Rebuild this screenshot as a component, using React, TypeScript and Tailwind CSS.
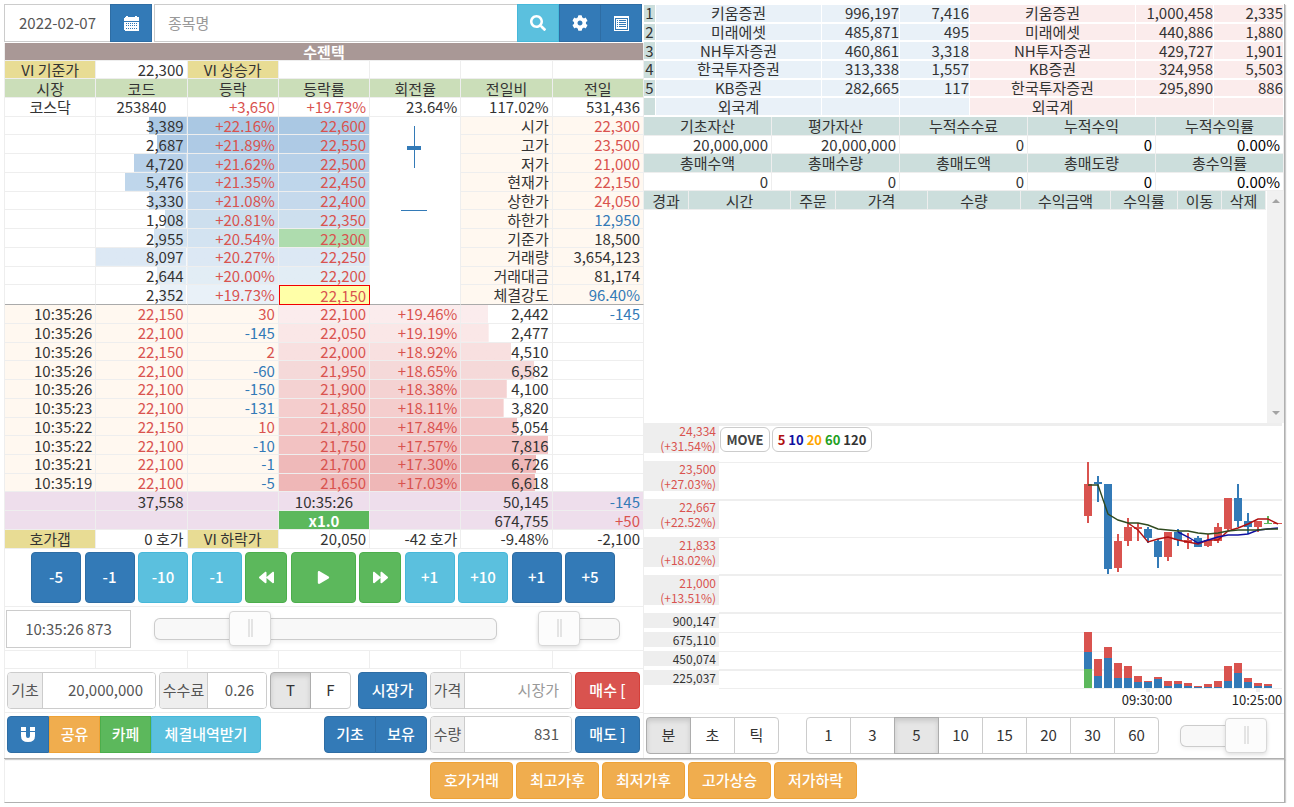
import type { ReactNode } from "react";
import { FaBackward, FaCog, FaForward, FaPlay, FaSearch } from "react-icons/fa";
import clsx from "clsx";

const RED = "text-[#d9534f]";
const BLUE = "text-[#337ab7]";

const toneOf = (value: string) => (value.startsWith("-") ? BLUE : RED);

const MAX_QTY = 8150;

const asks = [
  { qty: "3,389", rate: "+22.16%", price: "22,600", fill: "from-[#aac8e3] to-[#aac8e3]", label: "시가", value: "22,300", tone: RED },
  { qty: "2,687", rate: "+21.89%", price: "22,550", fill: "from-[#aecae5] to-[#aecae5]", label: "고가", value: "23,500", tone: RED },
  { qty: "4,720", rate: "+21.62%", price: "22,500", fill: "from-[#b7d0e8] to-[#b7d0e8]", label: "저가", value: "21,000", tone: RED },
  { qty: "5,476", rate: "+21.35%", price: "22,450", fill: "from-[#bfd6eb] to-[#bfd6eb]", label: "현재가", value: "22,150", tone: RED },
  { qty: "3,330", rate: "+21.08%", price: "22,400", fill: "from-[#c5d9ec] to-[#c5d9ec]", label: "상한가", value: "24,050", tone: RED },
  { qty: "1,908", rate: "+20.81%", price: "22,350", fill: "from-[#cddfee] to-[#cddfee]", label: "하한가", value: "12,950", tone: BLUE },
  { qty: "2,955", rate: "+20.54%", price: "22,300", fill: "from-[#d3e3f1] to-[#d3e3f1]", label: "기준가", value: "18,500", tone: "" },
  { qty: "8,097", rate: "+20.27%", price: "22,250", fill: "from-[#dce8f4] to-[#dce8f4]", label: "거래량", value: "3,654,123", tone: "" },
  { qty: "2,644", rate: "+20.00%", price: "22,200", fill: "from-[#e2edf5] to-[#e2edf5]", label: "거래대금", value: "81,174", tone: "" },
  { qty: "2,352", rate: "+19.73%", price: "22,150", fill: "from-[#e9f1f8] to-[#e9f1f8]", label: "체결강도", value: "96.40%", tone: BLUE },
];

const bids = [
  { time: "10:35:26", deal: "22,150", vol: "30", price: "22,100", rate: "+19.46%", qty: "2,442", diff: "-145", fill: "from-[#fbeced] to-[#fbeced]" },
  { time: "10:35:26", deal: "22,100", vol: "-145", price: "22,050", rate: "+19.19%", qty: "2,477", diff: "", fill: "from-[#fae7e7] to-[#fae7e7]" },
  { time: "10:35:26", deal: "22,150", vol: "2", price: "22,000", rate: "+18.92%", qty: "4,510", diff: "", fill: "from-[#f8e0e0] to-[#f8e0e0]" },
  { time: "10:35:26", deal: "22,100", vol: "-60", price: "21,950", rate: "+18.65%", qty: "6,582", diff: "", fill: "from-[#f5d9d9] to-[#f5d9d9]" },
  { time: "10:35:26", deal: "22,100", vol: "-150", price: "21,900", rate: "+18.38%", qty: "4,100", diff: "", fill: "from-[#f4d2d2] to-[#f4d2d2]" },
  { time: "10:35:23", deal: "22,100", vol: "-131", price: "21,850", rate: "+18.11%", qty: "3,820", diff: "", fill: "from-[#f4cdcd] to-[#f4cdcd]" },
  { time: "10:35:22", deal: "22,150", vol: "10", price: "21,800", rate: "+17.84%", qty: "5,054", diff: "", fill: "from-[#f3c6c6] to-[#f3c6c6]" },
  { time: "10:35:22", deal: "22,100", vol: "-10", price: "21,750", rate: "+17.57%", qty: "7,816", diff: "", fill: "from-[#f2c2c2] to-[#f2c2c2]" },
  { time: "10:35:21", deal: "22,100", vol: "-1", price: "21,700", rate: "+17.30%", qty: "6,726", diff: "", fill: "from-[#efb9b9] to-[#efb9b9]" },
  { time: "10:35:19", deal: "22,100", vol: "-5", price: "21,650", rate: "+17.03%", qty: "6,618", diff: "", fill: "from-[#efb7b7] to-[#efb7b7]" },
];

const brokers = [
  ["1", "키움증권", "996,197", "7,416", "키움증권", "1,000,458", "2,335"],
  ["2", "미래에셋", "485,871", "495", "미래에셋", "440,886", "1,880"],
  ["3", "NH투자증권", "460,861", "3,318", "NH투자증권", "429,727", "1,901"],
  ["4", "한국투자증권", "313,338", "1,557", "KB증권", "324,958", "5,503"],
  ["5", "KB증권", "282,665", "117", "한국투자증권", "295,890", "886"],
  ["", "외국계", "", "", "외국계", "", ""],
];

const accountHead = ["기초자산", "평가자산", "누적수수료", "누적수익", "누적수익률"];
const accountRow = ["20,000,000", "20,000,000", "0", "0", "0.00%"];
const tradeHead = ["총매수액", "총매수량", "총매도액", "총매도량", "총수익률"];
const tradeRow = ["0", "0", "0", "0", "0.00%"];

const priceAxis = [
  ["24,334", "(+31.54%)"],
  ["23,500", "(+27.03%)"],
  ["22,667", "(+22.52%)"],
  ["21,833", "(+18.02%)"],
  ["21,000", "(+13.51%)"],
];
const volumeAxis = ["900,147", "675,110", "450,074", "225,037"];

const UP = "#d9534f";
const DOWN = "#337ab7";
const FLAT = "#5cb85c";

// high, low, body top, body bottom, colour
const candles: [number, number, number, number, string][] = [
  [39, 100, 61, 93, UP],
  [53, 79, 59, 61, DOWN],
  [61, 151, 61, 146, DOWN],
  [111, 149, 118, 145, UP],
  [95, 123, 104, 118, UP],
  [100, 118, 104, 106, UP],
  [104, 120, 106, 115, DOWN],
  [116, 145, 118, 134, DOWN],
  [109, 138, 109, 134, UP],
  [106, 123, 109, 117, DOWN],
  [110, 126, 117, 120, UP],
  [113, 124, 115, 124, DOWN],
  [111, 124, 117, 123, UP],
  [100, 120, 104, 118, UP],
  [75, 107, 75, 106, UP],
  [61, 104, 75, 98, DOWN],
  [90, 111, 98, 104, DOWN],
  [98, 109, 98, 104, UP],
  [93, 101, 100, 101, FLAT],
];

// top of the buy part, top of the sell part
const volumes = [
  [209, 229], [236, 253], [224, 235], [240, 255], [243, 255], [253, 259], [258, 259], [254, 256], [258, 263], [258, 261],
  [260, 263], [263, 264], [261, 264], [258, 264], [243, 258], [240, 250], [255, 259], [260, 263], [261, 263],
];

const ma5 = [100, 107, 119, 116, 114, 117, 119, 121, 117, 117, 108, 105, 101, 96, 96, 101];
const ma10 = [109, 114, 120, 117, 114, 112, 112, 111, 107, 106, 105];
const ma60 = [62, 62, 91, 97, 100, 100, 102, 106, 107, 108, 108, 110, 111, 110, 108, 107, 107, 107, 106, 106];

const gridLines = [
  [0, 3], [39, 1], [76, 2], [114, 1], [151, 2], [189, 2], [209, 1], [228, 1], [246, 2], [265, 1],
];

const xAt = (i: number) => 369 + i * 10;
const toPoints = (ys: number[], start: number) => ys.map((y, i) => `${xAt(i + start)},${y}`).join(" ");
const barWidth = (qty: string) => `${(Number(qty.replace(",", "")) / MAX_QTY) * 100}% 100%`;

const solid = {
  primary: "border-[#2e6da4] bg-[#337ab7] text-white",
  info: "border-[#46b8da] bg-[#5bc0de] text-white",
  success: "border-[#4cae4c] bg-[#5cb85c] text-white",
  danger: "border-[#d43f3a] bg-[#d9534f] text-white",
  warning: "border-[#eea236] bg-[#f0ad4e] text-white",
};

function Btn({ kind, className, label, children }: { kind: keyof typeof solid; className?: string; label?: string; children: ReactNode }) {
  return (
    <button type="button" aria-label={label} className={clsx("flex shrink-0 items-center justify-center border font-medium", solid[kind], className)}>
      {children}
    </button>
  );
}

function Toggle({ items, active, width }: { items: string[]; active?: string; width: string }) {
  return (
    <div className="flex h-[37px]">
      {items.map((item) => (
        <button
          key={item}
          type="button"
          aria-pressed={item === active}
          className={clsx(
            "-ml-px border first:ml-0 first:rounded-l last:rounded-r",
            width,
            item === active ? "z-10 border-[#adadad] bg-[#e6e6e6] shadow-[inset_0_3px_5px_rgba(0,0,0,0.125)]" : "border-[#ccc] bg-white"
          )}
        >
          {item}
        </button>
      ))}
    </div>
  );
}

function Field({ id, label, value, placeholder, addon, className }: { id: string; label: string; value?: string; placeholder?: string; addon: string; className: string }) {
  return (
    <div className={clsx("flex h-[37px] overflow-hidden rounded border border-[#ccc] text-[#555]", className)}>
      <label htmlFor={id} className={clsx("flex shrink-0 items-center justify-center border-r border-[#ccc] bg-[#eee]", addon)}>
        {label}
      </label>
      <input id={id} defaultValue={value} placeholder={placeholder} className="w-full min-w-0 bg-white pr-3 text-right outline-none placeholder:text-[#999]" />
    </div>
  );
}

function Slider({ label, value, className }: { label: string; value: number; className: string }) {
  return (
    <input
      type="range"
      aria-label={label}
      defaultValue={value}
      className={clsx(
        "h-[35px] appearance-none bg-transparent",
        "[&::-webkit-slider-runnable-track]:h-[22px] [&::-webkit-slider-runnable-track]:rounded-md [&::-webkit-slider-runnable-track]:bg-[#f8f8f8] [&::-webkit-slider-runnable-track]:shadow-[inset_0_0_0_1px_#ccc,0_2px_4px_rgba(0,0,0,0.06)]",
        "[&::-webkit-slider-thumb]:-mt-[7px] [&::-webkit-slider-thumb]:h-[35px] [&::-webkit-slider-thumb]:w-[42px] [&::-webkit-slider-thumb]:appearance-none [&::-webkit-slider-thumb]:rounded [&::-webkit-slider-thumb]:border [&::-webkit-slider-thumb]:border-[#d8d8d8] [&::-webkit-slider-thumb]:bg-[#fcfcfc] [&::-webkit-slider-thumb]:shadow-[0_2px_4px_rgba(0,0,0,0.12)]",
        "[&::-webkit-slider-thumb]:bg-[linear-gradient(90deg,#e4e4e4_2px,#fcfcfc_2px,#fcfcfc_3px,#e4e4e4_3px)] [&::-webkit-slider-thumb]:bg-[length:5px_18px] [&::-webkit-slider-thumb]:bg-center [&::-webkit-slider-thumb]:bg-no-repeat",
        className
      )}
    />
  );
}

function CalendarIcon() {
  return (
    <svg viewBox="0 0 15 15" className="size-[15px]" fill="#fff" shapeRendering="crispEdges">
      <path d="M2 0h2v1h7V0h2v1h1l1 1v3H0V2l1-1h1z" />
      <path fillRule="evenodd" d="M0 6h15v8l-1 1H1l-1-1zM2 7v1h1V7zM4 7v1h1V7zM6 7v1h1V7zM8 7v1h1V7zM10 7v1h1V7zM12 7v1h1V7zM2 9v1h1V9zM4 9v1h1V9zM6 9v1h1V9zM8 9v1h1V9zM10 9v1h1V9zM12 9v1h1V9zM2 12v1h1v-1zM4 12v1h1v-1zM6 12v1h1v-1zM8 12v1h1v-1zM10 12v1h1v-1zM12 12v1h1v-1z" />
    </svg>
  );
}

function ListIcon() {
  return (
    <svg viewBox="0 0 15 15" className="size-[15px]" shapeRendering="crispEdges">
      <path fill="#fff" d="M0 0h15v15H0z" />
      <path fill="#337ab7" fillRule="evenodd" d="M1 2h13v12H1zM2 3v10h11V3z" />
      <path fill="#337ab7" d="M3 4h1v1H3zM5 4h7v1H5zM3 6h1v1H3zM5 6h7v1H5zM3 8h1v1H3zM5 8h7v1H5zM3 10h1v1H3zM5 10h7v1H5z" />
    </svg>
  );
}

function MagnetIcon() {
  return (
    <svg viewBox="0 0 14 15" className="h-[15px] w-[14px]" fill="#fff">
      <path d="M0 0h5v4H0zM9 0h5v4H9zM0 5h5v4q0 2 2 2t2-2V5h5v4q0 6-7 6T0 9z" />
    </svg>
  );
}

const cell = "border-r border-b border-[#eee] p-0";
const num = "border-r border-b border-[#eee] p-0 pr-[3px] text-right";
const gold = "border-r border-b border-[#eee] bg-[#e8dc94] p-0 text-center font-normal";
const cream = "bg-[#fff8f0]";
const violet = "bg-[#eedeec]";

function OrderBook() {
  return (
    <table className="mt-px h-[506px] w-full table-fixed border-separate border-spacing-0 border-l border-[#eee] leading-[17px]">
      <thead>
        <tr>
          <th colSpan={7} className="border-r border-b border-[#eee] bg-[#a99896] p-0 font-bold text-white">수젠텍</th>
        </tr>
        <tr>
          <th className={gold}>VI 기준가</th>
          <td className={num}>22,300</td>
          <th className={gold}>VI 상승가</th>
          <td className={cell} />
          <td className={cell} />
          <td className={cell} />
          <td className={cell} />
        </tr>
        <tr className="h-[19px]">
          {["시장", "코드", "등락", "등락률", "회전율", "전일비", "전일"].map((h) => (
            <th key={h} className="border-r border-b border-[#eee] bg-[#cbdeb9] p-0 font-normal">{h}</th>
          ))}
        </tr>
      </thead>
      <tbody>
        <tr>
          <td className={clsx(cell, "text-center")}>코스닥</td>
          <td className={clsx(cell, "text-center")}>253840</td>
          <td className={clsx(num, RED)}>+3,650</td>
          <td className={clsx(num, RED)}>+19.73%</td>
          <td className={num}>23.64%</td>
          <td className={num}>117.02%</td>
          <td className={num}>531,436</td>
        </tr>
        {asks.map((row, i) => {
          const last = i === asks.length - 1;
          const edge = last && "border-b-[#aaa]";
          return (
            <tr key={row.price}>
              <td className={clsx(cell, edge)} />
              <td className={clsx(num, edge, "bg-linear-to-r bg-right bg-no-repeat", row.fill)} style={{ backgroundSize: barWidth(row.qty) }}>
                {row.qty}
              </td>
              <td className={clsx(num, edge, RED, "bg-linear-to-r", row.fill)}>{row.rate}</td>
              <td
                className={clsx(
                  last ? "border border-[#f00000] bg-[#ffffa8] p-0 pr-[3px] text-right" : num,
                  RED,
                  row.price === "22,300" && "bg-[#aedcae]",
                  row.price !== "22,300" && !last && ["bg-linear-to-r", row.fill]
                )}
              >
                {row.price}
              </td>
              {i === 0 && (
                <td rowSpan={10} className="border-r border-b border-r-[#eee] border-b-[#aaa] p-0 align-top">
                  <svg viewBox="0 0 90 120" className="block w-full" fill={DOWN} shapeRendering="crispEdges">
                    <rect x="44" y="9" width="1" height="42" />
                    <rect x="37" y="29" width="14" height="4" />
                    <rect x="31" y="93" width="26" height="1" />
                  </svg>
                </td>
              )}
              <td className={clsx(num, edge, cream)}>{row.label}</td>
              <td className={clsx(num, edge, cream, row.tone)}>{row.value}</td>
            </tr>
          );
        })}
        {bids.map((row) => (
          <tr key={row.price}>
            <td className={clsx(num, cream)}>{row.time}</td>
            <td className={clsx(num, cream, RED)}>{row.deal}</td>
            <td className={clsx(num, cream, toneOf(row.vol))}>{row.vol}</td>
            <td className={clsx(num, RED, "bg-linear-to-r", row.fill)}>{row.price}</td>
            <td className={clsx(num, RED, "bg-linear-to-r", row.fill)}>{row.rate}</td>
            <td className={clsx(num, "bg-linear-to-r bg-left bg-no-repeat", row.fill)} style={{ backgroundSize: barWidth(row.qty) }}>
              {row.qty}
            </td>
            <td className={clsx(num, BLUE)}>{row.diff}</td>
          </tr>
        ))}
        <tr>
          <td className={clsx(cell, violet)} />
          <td className={clsx(num, violet)}>37,558</td>
          <td className={clsx(cell, violet)} />
          <td className={clsx(cell, violet, "text-center")}>10:35:26</td>
          <td className={clsx(cell, violet)} />
          <td className={clsx(num, violet)}>50,145</td>
          <td className={clsx(num, violet, BLUE)}>-145</td>
        </tr>
        <tr>
          <td className={clsx(cell, violet)} />
          <td className={clsx(cell, violet)} />
          <td className={clsx(cell, violet)} />
          <td className={clsx(cell, "bg-[#5cb85c] text-center font-bold text-white")}>x1.0</td>
          <td className={clsx(cell, violet)} />
          <td className={clsx(num, violet)}>674,755</td>
          <td className={clsx(num, violet, RED)}>+50</td>
        </tr>
        <tr>
          <th className={gold}>호가갭</th>
          <td className={num}>0 호가</td>
          <th className={gold}>VI 하락가</th>
          <td className={num}>20,050</td>
          <td className={num}>-42 호가</td>
          <td className={num}>-9.48%</td>
          <td className={num}>-2,100</td>
        </tr>
      </tbody>
    </table>
  );
}

function Brokers() {
  return (
    <table className="mt-px h-[112px] w-full table-fixed border-separate border-spacing-0 leading-4">
      <colgroup>
        <col className="w-[12px]" />
        <col className="w-[166px]" />
        <col className="w-[78px]" />
        <col className="w-[70px]" />
        <col className="w-[166px]" />
        <col className="w-[78px]" />
        <col className="w-[70px]" />
      </colgroup>
      <tbody>
        {brokers.map((row) => (
          <tr key={row[0]}>
            {row.map((text, i) => (
              <td
                key={i}
                className={clsx(
                  "border-r border-b-2 border-white p-0",
                  i === 0 ? "bg-[#ccdedc]" : i < 4 ? "bg-[#e9f1f8]" : "bg-[#fbecec]",
                  i === 0 || i === 1 || i === 4 ? "text-center" : "text-right"
                )}
              >
                {text}
              </td>
            ))}
          </tr>
        ))}
      </tbody>
    </table>
  );
}

function Account() {
  const head = "border-r border-b border-[#eee] bg-[#ccdedc] p-0 font-normal";
  const values = (row: string[]) =>
    row.map((v, i) => (
      <td key={i} className={clsx(num, i > 2 && "text-black")}>{v}</td>
    ));
  return (
    <table className="h-[74px] w-full table-fixed border-separate border-spacing-0 leading-[17px]">
      <tbody>
        <tr>{accountHead.map((h) => <th key={h} className={head}>{h}</th>)}</tr>
        <tr>{values(accountRow)}</tr>
        <tr>{tradeHead.map((h) => <th key={h} className={head}>{h}</th>)}</tr>
        <tr>{values(tradeRow)}</tr>
      </tbody>
    </table>
  );
}

function TradeList() {
  const head = "h-[19px] border-r border-b border-[#eee] bg-[#ccdedc] p-0 font-normal";
  return (
    <div className="flex h-[232px]">
      <table className="w-full flex-1 table-fixed self-start border-separate border-spacing-0 leading-[17px]">
        <thead>
          <tr>
            <th className={clsx(head, "w-[45px]")}>경과</th>
            <th className={clsx(head, "w-[102px]")}>시간</th>
            <th className={clsx(head, "w-[45px]")}>주문</th>
            <th className={clsx(head, "w-[92px]")}>가격</th>
            <th className={clsx(head, "w-[93px]")}>수량</th>
            <th className={clsx(head, "w-[90px]")}>수익금액</th>
            <th className={clsx(head, "w-[67px]")}>수익률</th>
            <th className={clsx(head, "w-[44px]")}>이동</th>
            <th className={clsx(head, "w-[44px]")}>삭제</th>
          </tr>
        </thead>
      </table>
      <div className="ml-px flex w-[17px] flex-col items-center justify-between bg-[#f1f1f1] py-[8px]">
        <svg viewBox="0 0 8 4" className="h-1 w-2" fill="#a3a3a3">
          <path d="M0 4 4 0l4 4z" />
        </svg>
        <svg viewBox="0 0 8 4" className="h-1 w-2" fill="#a3a3a3">
          <path d="m0 0 4 4 4-4z" />
        </svg>
      </div>
    </div>
  );
}

function Chart() {
  return (
    <div className="flex border-b border-[#eee]">
      <div className="w-[75px] shrink-0 text-[12px] leading-[15px]">
        <div className="grid h-[190px] grid-rows-5">
          {priceAxis.map(([price, rate]) => (
            <div key={price}>
              <div className={clsx("bg-[#eee] pr-[3px] text-right", RED)}>
                <p>{price}</p>
                <p>{rate}</p>
              </div>
            </div>
          ))}
        </div>
        <div className="grid h-[76px] grid-rows-4">
          {volumeAxis.map((v) => (
            <div key={v}>
              <div className="bg-[#eee] pr-[3px] text-right">{v}</div>
            </div>
          ))}
        </div>
      </div>
      <div className="relative min-w-0 flex-1">
        <svg viewBox="0 0 565 290" className="block w-full">
          <g shapeRendering="crispEdges">
            {gridLines.map(([y, h]) => (
              <rect key={y} x="0" y={y} width="563" height={h} fill="#eee" />
            ))}
            <rect x="427" y="265" width="4" height="4" fill="#eee" />
            <rect x="537" y="265" width="4" height="4" fill="#eee" />
            {candles.map(([high, low, top, bottom, color], i) => (
              <g key={i} fill={color}>
                <rect x={xAt(i) - 1} y={high} width="2" height={low - high} />
                <rect x={xAt(i) - 4} y={top} width="8" height={bottom - top} />
              </g>
            ))}
            <rect x="554" y="100" width="9" height="1" fill={UP} />
            {volumes.map(([buy, sell], i) => (
              <g key={i}>
                <rect x={xAt(i) - 4} y={buy} width="8" height={265 - buy} fill={UP} />
                <rect x={xAt(i) - 4} y={sell} width="8" height={265 - sell} fill={DOWN} />
              </g>
            ))}
            <rect x="365" y="246" width="8" height="19" fill={FLAT} />
          </g>
          <g fill="none" strokeWidth="1.400">
            <polyline points={toPoints(ma5, 4)} stroke="#b01010" />
            <polyline points={toPoints(ma10, 9)} stroke="#1010a0" />
            <polyline points={toPoints(ma60, 0)} stroke="#2f4a1f" />
          </g>
          <g fill="#222" fontSize="13" textAnchor="middle">
            <text x="428" y="282">09:30:00</text>
            <text x="538" y="282">10:25:00</text>
          </g>
        </svg>
        <div className="absolute top-1 left-px flex gap-[2px] text-[13px] font-bold">
          <button type="button" className="h-[25px] w-[50px] rounded-md border border-[#ccc] bg-white text-[#444]">MOVE</button>
          <button type="button" className="flex h-[25px] w-[100px] items-center justify-center gap-[3px] rounded-md border border-[#ccc] bg-white">
            <span className="text-[#b01010]">5</span>
            <span className="text-[#1010a0]">10</span>
            <span className="text-[#ffa500]">20</span>
            <span className="text-[#22a022]">60</span>
            <span>120</span>
          </button>
        </div>
      </div>
    </div>
  );
}

export default function App() {
  return (
    <div className="mr-[9px] ml-1 bg-white pt-1 font-['Noto_Sans_CJK_KR','Noto_Sans',sans-serif] text-[15px] text-[#333]">
      <main className="grid grid-cols-2 border-r border-b border-[#b0b0b0] shadow-[1px_1px_1px_rgba(0,0,0,0.2)]">
        <section>
          <form className="flex h-[38px] pr-[2px] text-[#555]">
            <input aria-label="날짜" defaultValue="2022-02-07" className="w-[106px] border border-r-0 border-[#ccc] pl-[14px] outline-none" />
            <Btn kind="primary" className="mr-[2px] w-[42px]" label="달력"><CalendarIcon /></Btn>
            <input aria-label="종목명" placeholder="종목명" className="min-w-0 flex-1 border border-r-0 border-[#ccc] pl-[13px] outline-none placeholder:text-[#999]" />
            <Btn kind="info" className="w-[42px]" label="검색"><FaSearch className="size-4" /></Btn>
            <Btn kind="primary" className="w-[42px]" label="설정"><FaCog className="size-4" /></Btn>
            <Btn kind="primary" className="-ml-px w-[42px]" label="목록"><ListIcon /></Btn>
          </form>

          <OrderBook />

          {/* Replay controls */}
          <div className="border-x border-b border-[#eee] py-[3px] pr-[2px]">
            <div className="mx-auto flex h-[51px] w-full max-w-[584px] justify-between">
              <Btn kind="primary" className="w-[50px] rounded">-5</Btn>
              <Btn kind="primary" className="w-[50px] rounded">-1</Btn>
              <Btn kind="info" className="w-[50px] rounded">-10</Btn>
              <Btn kind="info" className="w-[50px] rounded">-1</Btn>
              <Btn kind="success" className="w-[42px] rounded" label="뒤로"><FaBackward className="size-[15px]" /></Btn>
              <Btn kind="success" className="w-[65px] rounded" label="재생"><FaPlay className="size-[13px]" /></Btn>
              <Btn kind="success" className="w-[42px] rounded" label="앞으로"><FaForward className="size-[15px]" /></Btn>
              <Btn kind="info" className="w-[50px] rounded">+1</Btn>
              <Btn kind="info" className="w-[50px] rounded">+10</Btn>
              <Btn kind="primary" className="w-[50px] rounded">+1</Btn>
              <Btn kind="primary" className="w-[50px] rounded">+5</Btn>
            </div>
          </div>
          <div className="flex h-[44px] items-center border-x border-b border-[#eee] pr-[23px] pl-px">
            <input aria-label="시각" defaultValue="10:35:26 873" className="h-[38px] w-[125px] border border-[#ccc] text-center text-[#555] outline-none" />
            <Slider label="시간 이동" value={25} className="ml-[23px] min-w-0 flex-1" />
            <Slider label="재생 속도" value={0} className="ml-[41px] w-[82px]" />
          </div>
          <div className="grid h-[18px] grid-cols-7 border-b border-l border-[#eee]">
            {[0, 1, 2, 3, 4, 5, 6].map((i) => (
              <div key={i} className="border-r border-[#eee]" />
            ))}
          </div>

          {/* Order form */}
          <div className="flex gap-[3px] border-x border-b border-[#eee] py-[3px] pr-[3px] pl-[2px]">
            <Field id="base" label="기초" value="20,000,000" addon="w-[35px]" className="w-[149px]" />
            <Field id="fee" label="수수료" value="0.26" addon="w-[48px]" className="w-[108px]" />
            <Toggle items={["T", "F"]} active="T" width="w-[41px]" />
            <Btn kind="primary" className="ml-auto w-[69px] rounded">시장가</Btn>
            <Field id="price" label="가격" placeholder="시장가" addon="w-[34px]" className="w-[142px]" />
            <Btn kind="danger" className="w-[65px] rounded">매수 [</Btn>
          </div>
          <div className="flex h-[45px] gap-[3px] border-x border-[#eee] pt-[3px] pr-[3px] pl-[2px]">
            <div className="mr-auto flex h-[37px]">
              <Btn kind="primary" className="w-[42px] rounded-l" label="자석"><MagnetIcon /></Btn>
              <Btn kind="warning" className="w-[51px]">공유</Btn>
              <Btn kind="success" className="w-[51px]">카페</Btn>
              <Btn kind="info" className="w-[110px] rounded-r">체결내역받기</Btn>
            </div>
            <div className="flex h-[37px]">
              <Btn kind="primary" className="w-[52px] rounded-l">기초</Btn>
              <Btn kind="primary" className="-ml-px w-[52px] rounded-r">보유</Btn>
            </div>
            <Field id="qty" label="수량" value="831" addon="w-[34px]" className="w-[142px]" />
            <Btn kind="primary" className="h-[37px] w-[65px] rounded">매도 ]</Btn>
          </div>
        </section>

        <section>
          <Brokers />
          <Account />
          <TradeList />
          <Chart />
          <div className="flex items-center pt-[3px] pr-[17px] pl-[2px]">
            <Toggle items={["분", "초", "틱"]} active="분" width="w-[45px]" />
            <div className="ml-[27px]">
              <Toggle items={["1", "3", "5", "10", "15", "20", "30", "60"]} active="5" width="w-[45px]" />
            </div>
            <Slider label="확대" value={100} className="ml-auto w-[87px]" />
          </div>
        </section>
      </main>

      <footer className="flex justify-center gap-[3px] border-r border-b border-l border-[#b0b0b0] border-l-[#eee] py-[3px] pr-[2px] shadow-[1px_1px_1px_rgba(0,0,0,0.2)]">
        {["호가거래", "최고가후", "최저가후", "고가상승", "저가하락"].map((name) => (
          <Btn key={name} kind="warning" className="h-[37px] w-[83px] rounded">{name}</Btn>
        ))}
      </footer>
    </div>
  );
}
